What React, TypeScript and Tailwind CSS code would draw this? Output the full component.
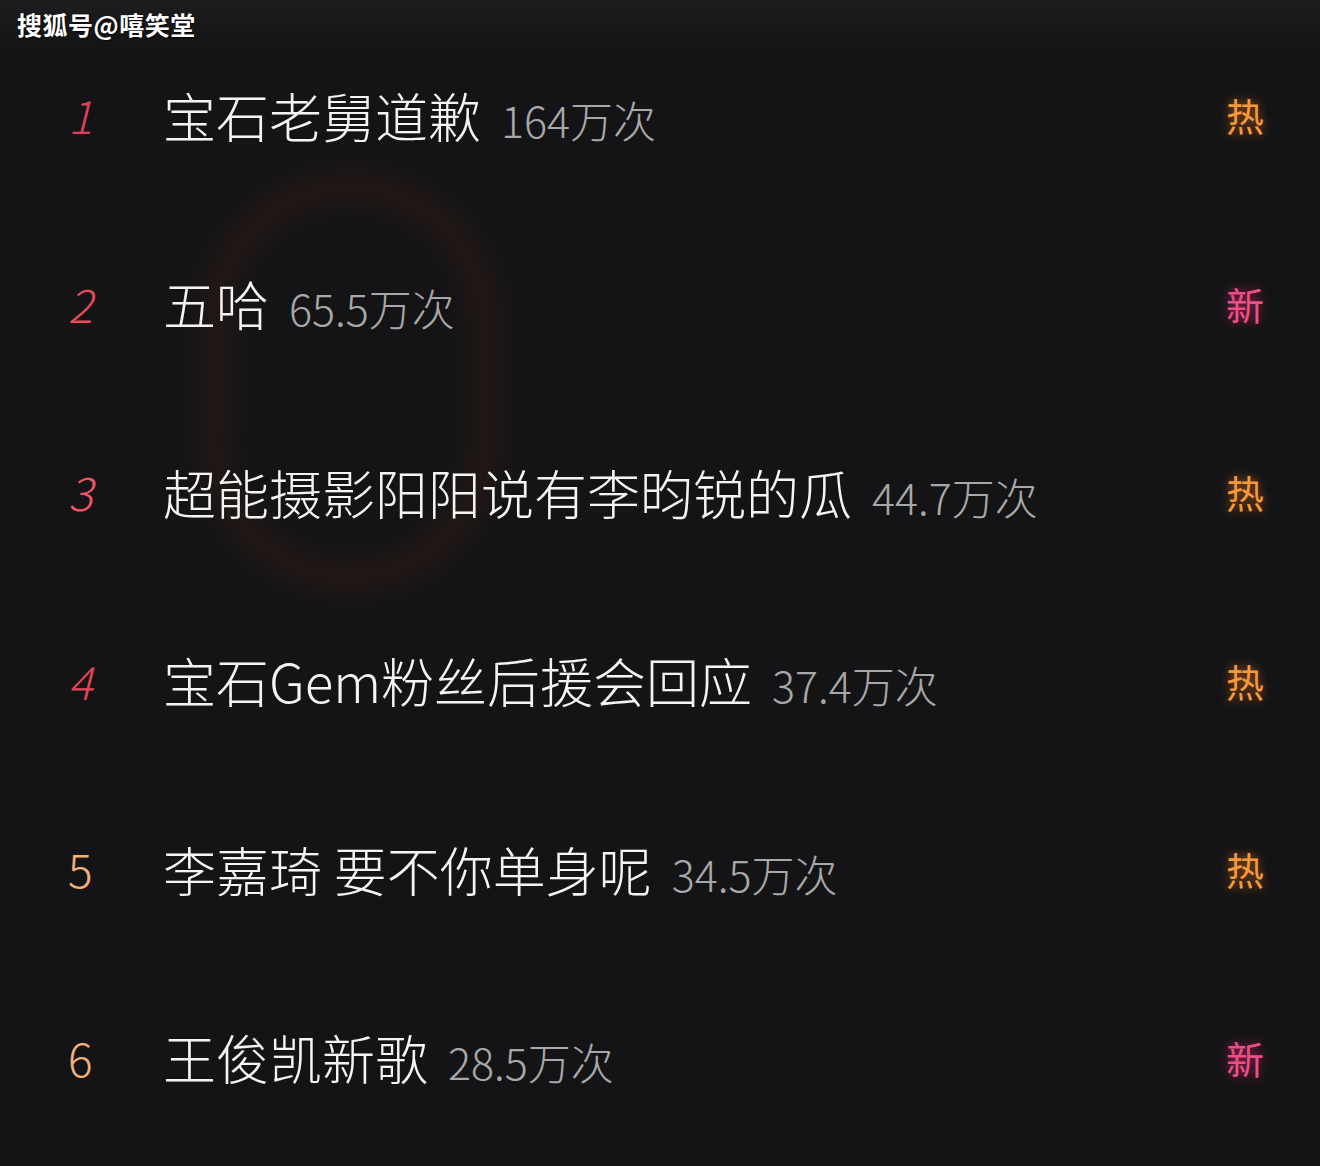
const rows = [
  { rank: '1', title: '宝石老舅道歉', count: '164万次', tag: '热', rankColor: 'text-[#d8425a]', italic: true },
  { rank: '2', title: '五哈', count: '65.5万次', tag: '新', rankColor: 'text-[#e84a5c]', italic: true },
  { rank: '3', title: '超能摄影阳阳说有李昀锐的瓜', count: '44.7万次', tag: '热', rankColor: 'text-[#ec5868]', italic: true },
  { rank: '4', title: '宝石Gem粉丝后援会回应', count: '37.4万次', tag: '热', rankColor: 'text-[#e04656]', italic: true },
  { rank: '5', title: '李嘉琦 要不你单身呢', count: '34.5万次', tag: '热', rankColor: 'text-[#f2b277]', italic: false },
  { rank: '6', title: '王俊凯新歌', count: '28.5万次', tag: '新', rankColor: 'text-[#f2b277]', italic: false },
]

function Tag({ tag }: { tag: string }) {
  if (tag === '新') {
    return (
      <span className="text-[38px] leading-none text-[#e9508a] [text-shadow:0_0_10px_rgba(230,40,100,0.7)]">
        {tag}
      </span>
    )
  }
  return (
    <span className="text-[38px] leading-none text-[#f59a3c] [text-shadow:0_0_10px_rgba(240,120,30,0.7)]">
      {tag}
    </span>
  )
}

export default function App() {
  return (
    <div className="relative w-full h-[1166px] overflow-hidden bg-[#141416] font-['Noto_Sans_CJK_SC',sans-serif]">
      {/* faint ring in the background art */}
      <div className="absolute left-[200px] top-[172px] w-[300px] h-[420px] rounded-[150px] border-[30px] border-[#2e1a16] opacity-60 blur-[12px]" />
      <div className="absolute left-0 top-0 w-full h-[50px] bg-gradient-to-b from-[#1d1d1f] to-transparent" />

      <div className="absolute left-[17px] top-[6px] text-[25px] font-bold text-white tracking-[0.5px] [text-shadow:1px_1px_2px_rgba(0,0,0,0.9)]">
        搜狐号@嘻笑堂
      </div>

      <div className="relative flex flex-col pt-[21px]">
        {rows.map(r => (
          <div key={r.rank} className="flex items-center h-[188.5px] pl-[68px] pr-[56px]">
            <div className="w-[95px] shrink-0">
              <span
                className={
                  'text-[46px] font-light leading-none ' +
                  r.rankColor +
                  (r.italic ? ' italic' : '')
                }
              >
                {r.rank}
              </span>
            </div>
            <div className="flex items-baseline gap-[20px] flex-1">
              <span className="text-[53px] font-light leading-none text-[#f4f4f4]">{r.title}</span>
              <span className="text-[43px] font-light leading-none text-[#a8a8aa]">{r.count}</span>
            </div>
            <Tag tag={r.tag} />
          </div>
        ))}
      </div>
    </div>
  )
}
